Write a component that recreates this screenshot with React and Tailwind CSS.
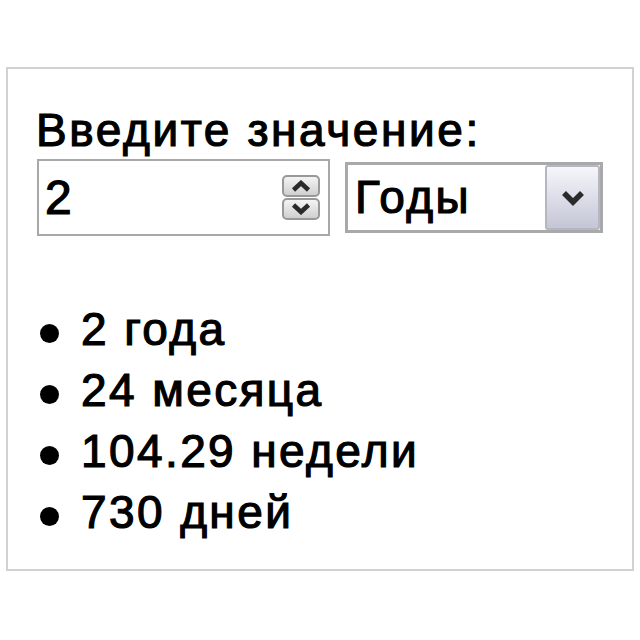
export default function App() {
  const results = ['2 года', '24 месяца', '104.29 недели', '730 дней'];

  return (
    <div className="w-[640px] h-[640px] bg-white overflow-hidden pt-[67px] pl-[6px] text-black [-webkit-text-stroke:1.2px_black]" style={{ fontFamily: '"Liberation Sans", Arial, sans-serif' }}>
      <div className="w-[628px] h-[504px] border-2 border-[#d2d2d2] pl-[29px] pt-[35px]">
        <div className="text-[46px] leading-[52px] -ml-[1px] tracking-[2.6px]">Введите значение:</div>

        <div className="flex items-center mt-[3px]">
          {/* number field */}
          <div className="w-[293px] h-[77px] border-2 border-[#a8a8a8] flex items-center pl-[6px] pr-[8px]">
            <span className="flex-1 text-[48px] leading-none">2</span>
            <div className="flex flex-col gap-[1px]">
              <div className="w-[38px] h-[22px] rounded-[5px] border-2 border-[#999] bg-gradient-to-b from-[#f4f4f4] to-[#d0d0d0] flex items-center justify-center">
                <svg width="20" height="12" viewBox="0 0 20 12">
                  <path d="M2.5 10 L10 3 L17.5 10" fill="none" stroke="#2a2a2a" strokeWidth="4.5" />
                </svg>
              </div>
              <div className="w-[38px] h-[22px] rounded-[5px] border-2 border-[#999] bg-gradient-to-b from-[#f4f4f4] to-[#d0d0d0] flex items-center justify-center">
                <svg width="20" height="12" viewBox="0 0 20 12">
                  <path d="M2.5 2 L10 9 L17.5 2" fill="none" stroke="#2a2a2a" strokeWidth="4.5" />
                </svg>
              </div>
            </div>
          </div>

          {/* unit select */}
          <div className="ml-[15px] w-[258px] h-[71px] border-[3px] border-[#a9a9a9] flex items-stretch">
            <span className="flex-1 flex items-center pl-[7px] text-[46px] tracking-[2.4px]">Годы</span>
            <div className="w-[55px] border-2 border-[#b4b6c2] rounded-[3px] bg-gradient-to-b from-[#f6f6fa] to-[#c4c6d6] flex items-center justify-center">
              <svg width="24" height="18" viewBox="0 0 24 18">
                <path d="M3 4 L12 13 L21 4" fill="none" stroke="#2a2a2a" strokeWidth="5.5" />
              </svg>
            </div>
          </div>
        </div>

        <ul className="mt-[63px]">
          {results.map((r) => (
            <li key={r} className="flex items-center h-[61px] text-[46px] leading-[61px] tracking-[2.4px]">
              <span className="w-[19px] h-[19px] rounded-full bg-black ml-[3px] mr-[22px] mt-[8px]" />
              <span>{r}</span>
            </li>
          ))}
        </ul>
      </div>
    </div>
  );
}
